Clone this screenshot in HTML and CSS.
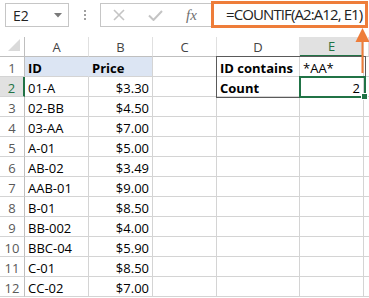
FILE: index.html
```html
<!DOCTYPE html>
<html>
<head>
<meta charset="utf-8">
<link rel="stylesheet" href="styles.css">
</head>
<body>
<div class="toolbar">
  <div class="namebox"><span>E2</span><svg class="caret" width="8" height="5" viewBox="0 0 8 5"><polygon points="0,0 8,0 4,4.5" fill="#7a7a7a"/></svg></div>
  <div class="dots"><i></i><i></i><i></i></div>
  <div class="fbtns">
    <svg class="ico-x" width="12" height="12" viewBox="0 0 12 12"><path d="M1 1 L11 11 M11 1 L1 11" stroke="#c4c4c4" stroke-width="1.6" fill="none"/></svg>
    <svg class="ico-ok" width="15" height="11" viewBox="0 0 15 11"><path d="M1 5.5 L5.5 10 L14 1" stroke="#c4c4c4" stroke-width="2" fill="none"/></svg>
    <span class="fx">fx</span>
  </div>
  <div class="formula">=COUNTIF(A2:A12, E1)</div>
</div>
<div class="sheet">
  <div class="h corner"><svg width="13" height="13" viewBox="0 0 13 13"><polygon points="12,0 12,12 0,12" fill="#dadada"/></svg></div>
  <div class="h">A</div><div class="h">B</div><div class="h">C</div><div class="h">D</div><div class="h hs">E</div><div class="h"></div>

  <div class="r">1</div><div class="c blue b blue-r">ID</div><div class="c blue b">Price</div><div class="c"></div><div class="c b">ID contains</div><div class="c">*AA*</div><div class="c"></div>
  <div class="r rs">2</div><div class="c">01-A</div><div class="c num">$3.30</div><div class="c"></div><div class="c b">Count</div><div class="c num">2</div><div class="c"></div>
  <div class="r">3</div><div class="c">02-BB</div><div class="c num">$4.50</div><div class="c"></div><div class="c"></div><div class="c"></div><div class="c"></div>
  <div class="r">4</div><div class="c">03-AA</div><div class="c num">$7.00</div><div class="c"></div><div class="c"></div><div class="c"></div><div class="c"></div>
  <div class="r">5</div><div class="c">A-01</div><div class="c num">$5.00</div><div class="c"></div><div class="c"></div><div class="c"></div><div class="c"></div>
  <div class="r">6</div><div class="c">AB-02</div><div class="c num">$3.49</div><div class="c"></div><div class="c"></div><div class="c"></div><div class="c"></div>
  <div class="r">7</div><div class="c">AAB-01</div><div class="c num">$9.00</div><div class="c"></div><div class="c"></div><div class="c"></div><div class="c"></div>
  <div class="r">8</div><div class="c">B-01</div><div class="c num">$8.50</div><div class="c"></div><div class="c"></div><div class="c"></div><div class="c"></div>
  <div class="r">9</div><div class="c">BB-002</div><div class="c num">$4.00</div><div class="c"></div><div class="c"></div><div class="c"></div><div class="c"></div>
  <div class="r">10</div><div class="c">BBC-04</div><div class="c num">$5.90</div><div class="c"></div><div class="c"></div><div class="c"></div><div class="c"></div>
  <div class="r">11</div><div class="c">C-01</div><div class="c num">$8.50</div><div class="c"></div><div class="c"></div><div class="c"></div><div class="c"></div>
  <div class="r">12</div><div class="c">CC-02</div><div class="c num">$7.00</div><div class="c"></div><div class="c"></div><div class="c"></div><div class="c"></div>
</div>
<div class="rng"></div>
<div class="sel"></div>
<svg class="arrow" width="16" height="48" viewBox="0 0 16 48"><polygon points="8.5,1 1.5,15 15.5,15" fill="#ee7d3a"/><rect x="7.5" y="14" width="2" height="32" fill="#ee7d3a"/></svg>
</body>
</html>
```
FILE: styles.css
```css
html, body {
  margin: 0;
  padding: 0;
}
body {
  width: 369px;
  height: 298px;
  overflow: hidden;
  position: relative;
  background: #ffffff;
  font-family: "Open Sans", "Liberation Sans", sans-serif;
  color: #000;
}
.toolbar {
  display: flex;
  align-items: flex-start;
  height: 37px;
  padding-top: 3px;
  box-sizing: border-box;
}
.namebox {
  margin-left: 5px;
  width: 64px;
  height: 24px;
  box-sizing: border-box;
  border: 1px solid #c6c6c6;
  display: flex;
  align-items: center;
  padding: 0 6px 0 7px;
  font-size: 14px;
  color: #222;
}
.namebox .caret {
  margin-left: auto;
}
.dots {
  margin-left: 15px;
  margin-top: 7px;
  display: flex;
  flex-direction: column;
  gap: 2px;
}
.dots i {
  display: block;
  width: 2px;
  height: 2px;
  background: #a0a0a0;
}
.fbtns {
  margin-left: 14px;
  width: 112px;
  height: 24px;
  box-sizing: border-box;
  border: 1px solid #c6c6c6;
  border-right: 0;
  display: flex;
  align-items: center;
  padding-left: 12px;
}
.ico-ok {
  margin-left: 23px;
}
.fx {
  margin-left: 23px;
  font-family: "Liberation Serif", serif;
  font-style: italic;
  font-size: 15px;
  color: #707070;
  line-height: 1;
}
.formula {
  margin-top: -2px;
  margin-left: -1px;
  width: 157px;
  height: 27px;
  box-sizing: border-box;
  border: 3px solid #ee7d3a;
  padding-left: 12px;
  font-size: 15px;
  line-height: 20px;
  letter-spacing: -0.9px;
  color: #222;
  white-space: nowrap;
}
.sheet {
  display: grid;
  grid-template-columns: 25px 64px 64px 64px 83px 64px 5px;
  grid-auto-rows: 20px;
}
.h {
  box-sizing: border-box;
  border-right: 1px solid #e0e0e0;
  border-bottom: 1px solid #bfbfbf;
  display: flex;
  align-items: center;
  justify-content: center;
  font-size: 13px;
  color: #444;
}
.corner {
  border-right: 1px solid #bfbfbf;
  justify-content: flex-end;
  align-items: flex-end;
  padding: 0 3px 4px 0;
}
.hs {
  background: #e1e1e1;
  color: #217346;
  border-bottom: 2px solid #217346;
}
.r {
  box-sizing: border-box;
  border-right: 1px solid #bfbfbf;
  border-bottom: 1px solid #d4d4d4;
  display: flex;
  align-items: flex-end;
  justify-content: center;
  font-size: 13px;
  line-height: 16px;
  color: #595959;
}
.rs {
  background: #e1e1e1;
  color: #217346;
  border-right: 2px solid #217346;
}
.c {
  box-sizing: border-box;
  border-right: 1px solid #d4d4d4;
  border-bottom: 1px solid #d4d4d4;
  display: flex;
  align-items: flex-end;
  padding: 0 3px;
  font-size: 13px;
  line-height: 16px;
  white-space: nowrap;
  overflow: hidden;
}
.num {
  justify-content: flex-end;
}
.b {
  font-weight: bold;
}
.blue {
  background: #dce5f3;
}
.blue-r {
  border-right-color: #dce5f3;
}
.rng {
  position: absolute;
  left: 216px;
  top: 56px;
  width: 150px;
  height: 42px;
  box-sizing: border-box;
  border: 1px solid #5a5a5a;
}
.sel {
  position: absolute;
  left: 299px;
  top: 76px;
  width: 67px;
  height: 22px;
  box-sizing: border-box;
  border: 2px solid #217346;
}
.sel::after {
  content: "";
  position: absolute;
  right: -4px;
  bottom: -4px;
  width: 5px;
  height: 5px;
  background: #217346;
  border: 1px solid #fff;
}
.arrow {
  position: absolute;
  left: 354px;
  top: 27px;
}
```
